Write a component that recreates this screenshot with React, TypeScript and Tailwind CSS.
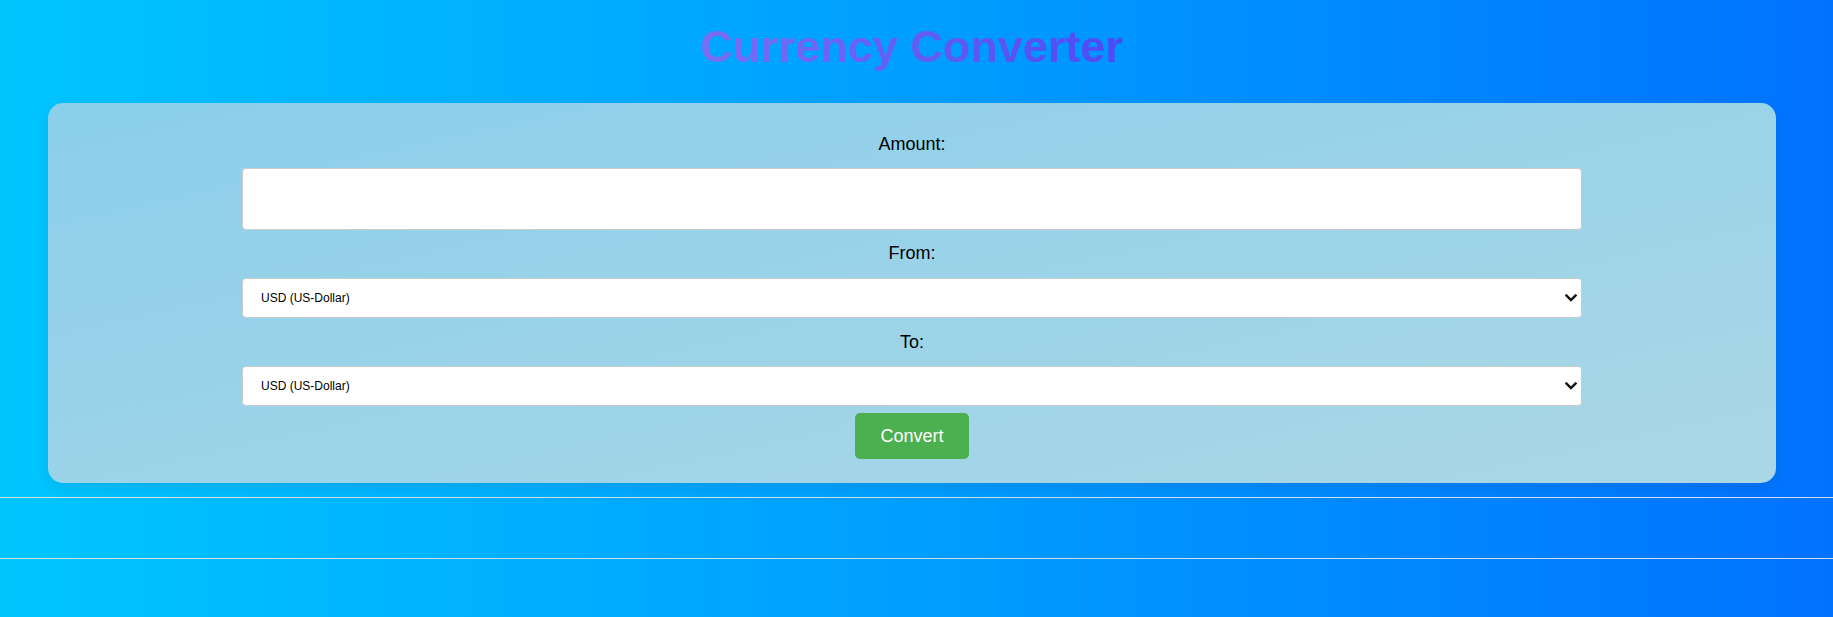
import { useState } from "react"

const currencies = [
  { code: "USD", name: "US-Dollar" },
  { code: "EUR", name: "Euro" },
  { code: "GBP", name: "British Pound" },
  { code: "JPY", name: "Japanese Yen" },
  { code: "INR", name: "Indian Rupee" },
]

function CurrencySelect({ value, onChange }: { value: string; onChange: (v: string) => void }) {
  return (
    <div className="relative mx-auto w-[1340px]">
      <select
        value={value}
        onChange={(e) => onChange(e.target.value)}
        className="block w-full h-[40px] pl-[18px] pr-8 appearance-none bg-white border border-[#cccccc] rounded-[4px] text-[12px] text-black outline-none"
      >
        {currencies.map((c) => (
          <option key={c.code} value={c.code}>
            {c.code} ({c.name})
          </option>
        ))}
      </select>
      <svg
        className="pointer-events-none absolute right-[5px] top-1/2 -translate-y-1/2"
        width="12"
        height="8"
        viewBox="0 0 12 8"
        fill="none"
      >
        <path d="M1.5 1.5 L6 6 L10.5 1.5" stroke="#111" strokeWidth="2.4" strokeLinecap="square" />
      </svg>
    </div>
  )
}

export default function App() {
  const [amount, setAmount] = useState("")
  const [from, setFrom] = useState("USD")
  const [to, setTo] = useState("USD")

  return (
    <div className="h-[617px] w-full overflow-hidden bg-gradient-to-r from-[#00c6ff] to-[#0072ff] font-['Liberation_Sans',Arial,sans-serif]">
      <div className="pt-[21px] pr-[10px] text-center">
        <h1 className="inline-block text-[45px] leading-[51px] font-bold bg-gradient-to-r from-[#7a6ef2] to-[#4f48f4] bg-clip-text text-transparent">
          Currency Converter
        </h1>
      </div>

      <div className="mt-[31px] ml-[48px] mr-[57px] h-[380px] rounded-[15px] bg-gradient-to-br from-[#8bcfeb] to-[#aad7e5] shadow-[0_6px_16px_rgba(0,0,0,0.08)] pt-[31px] text-center">
        <label className="block text-[18px] leading-[21px] text-black">Amount:</label>
        <input
          type="number"
          value={amount}
          onChange={(e) => setAmount(e.target.value)}
          className="block mx-auto mt-[13px] w-[1340px] h-[62px] px-3 bg-white border border-[#cccccc] rounded-[4px] text-[16px] outline-none"
        />

        <label className="block mt-[13px] text-[18px] leading-[21px] text-black">From:</label>
        <div className="mt-[14px]">
          <CurrencySelect value={from} onChange={setFrom} />
        </div>

        <label className="block mt-[14px] text-[18px] leading-[21px] text-black">To:</label>
        <div className="mt-[13px]">
          <CurrencySelect value={to} onChange={setTo} />
        </div>

        <button className="mt-[7px] w-[114px] h-[46px] rounded-[5px] bg-[#4caf50] text-white text-[18px]">
          Convert
        </button>
      </div>

      <div className="mt-[14px] h-px bg-[#d3dee3]" />
      <div className="mt-[60px] h-px bg-[#d3dee3]" />
    </div>
  )
}
